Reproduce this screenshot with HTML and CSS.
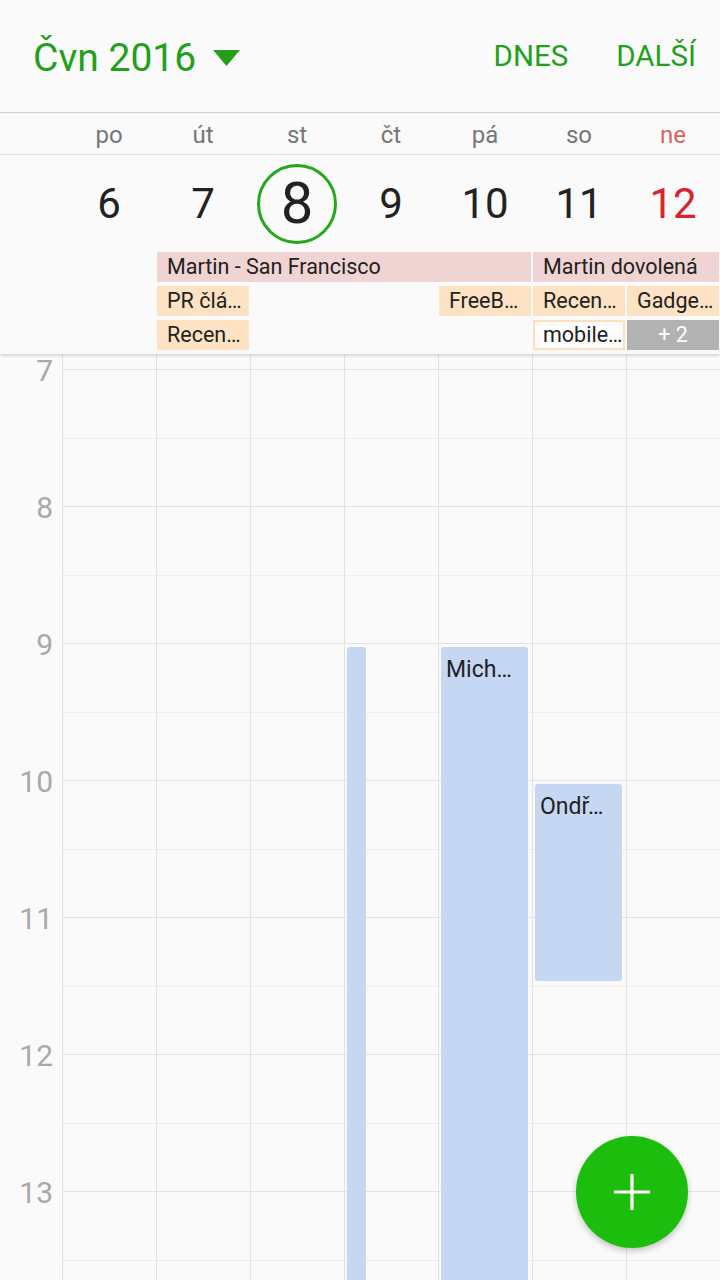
FILE: index.html
```html
<!DOCTYPE html>
<html lang="cs">
<head>
<meta charset="utf-8">
<title>Kalendář</title>
<link rel="stylesheet" href="styles.css">
</head>
<body>
<div class="app">
  <header class="topbar">
    <div class="title">Čvn 2016</div>
    <svg class="caret" width="27" height="16" viewBox="0 0 27 16"><polygon points="0,0 27,0 13.5,16" fill="#22a01a"/></svg>
    <div class="spacer"></div>
    <div class="action">DNES</div>
    <div class="action">DALŠÍ</div>
  </header>

  <section class="weekhead">
    <div class="daynames">
      <div></div>
      <div>po</div><div>út</div><div>st</div><div>čt</div><div>pá</div><div>so</div><div class="sun">ne</div>
    </div>
    <div class="dates">
      <div></div>
      <div class="date">6</div>
      <div class="date">7</div>
      <div class="date today"><span>8</span></div>
      <div class="date">9</div>
      <div class="date">10</div>
      <div class="date">11</div>
      <div class="date sun">12</div>
    </div>
    <div class="allday">
      <div class="ad pink c3-7 r1">Martin - San Francisco</div>
      <div class="ad pink c7-9 r1">Martin dovolená</div>
      <div class="ad orange c3 r2">PR člá…</div>
      <div class="ad orange c6 r2">FreeB…</div>
      <div class="ad orange c7 r2">Recen…</div>
      <div class="ad orange c8 r2">Gadge…</div>
      <div class="ad orange c3 r3">Recen…</div>
      <div class="ad outline c7 r3">mobile…</div>
      <div class="ad more c8 r3">+ 2</div>
    </div>
  </section>

  <section class="timeline">
    <div class="slot hour r2"></div><div class="hlabel r2">7</div>
    <div class="slot half r3"></div>
    <div class="slot hour r4"></div><div class="hlabel r4">8</div>
    <div class="slot half r5"></div>
    <div class="slot hour r6"></div><div class="hlabel r6">9</div>
    <div class="slot half r7"></div>
    <div class="slot hour r8"></div><div class="hlabel r8">10</div>
    <div class="slot half r9"></div>
    <div class="slot hour r10"></div><div class="hlabel r10">11</div>
    <div class="slot half r11"></div>
    <div class="slot hour r12"></div><div class="hlabel r12">12</div>
    <div class="slot half r13"></div>
    <div class="slot hour r14"></div><div class="hlabel r14">13</div>
    <div class="slot half r15"></div>

    <div class="ev ev-thin"></div>
    <div class="ev ev-mich">Mich…</div>
    <div class="ev ev-ondr">Ondř…</div>
  </section>

  <button class="fab" aria-label="Přidat">
    <svg width="36" height="36" viewBox="0 0 36 36"><path d="M18 0V36M0 18H36" stroke="#fff" stroke-width="3.2" fill="none"/></svg>
  </button>
</div>
</body>
</html>
```

FILE: styles.css
```css
* { box-sizing: border-box; }
html, body {
  margin: 0;
  padding: 0;
}
body {
  width: 720px;
  height: 1280px;
  overflow: hidden;
  background: #fafafa;
  font-family: Roboto, "Noto Sans", "Liberation Sans", sans-serif;
  color: #222;
}
.app {
  position: relative;
  width: 720px;
  height: 1280px;
  overflow: hidden;
}

/* top bar */
.topbar {
  height: 113px;
  display: flex;
  align-items: center;
  padding: 0 24px 0 33px;
  border-bottom: 1px solid #d4d4d4;
  background: #fafafa;
}
.title {
  font-size: 39px;
  color: #22a01a;
  padding-top: 3px;
}
.caret {
  margin-left: 17px;
  margin-top: 3px;
}
.spacer { flex: 1; }
.action {
  font-size: 29.5px;
  color: #22a01a;
  margin-left: 48px;
  padding-bottom: 1px;
}

/* week header */
.weekhead {
  position: relative;
  z-index: 3;
  background: #fafafa;
  box-shadow: 0 2px 3px rgba(0, 0, 0, 0.14);
  padding-bottom: 4px;
}
.daynames {
  display: grid;
  grid-template-columns: 62px repeat(7, 94px);
  height: 42px;
  border-bottom: 1px solid #e2e2e2;
  font-size: 24px;
  color: #767676;
  text-align: center;
  line-height: 44px;
}
.daynames .sun { color: #d96464; }

.dates {
  display: grid;
  grid-template-columns: 62px repeat(7, 94px);
  height: 80px;
  margin-top: 9px;
  margin-bottom: 8px;
  align-items: center;
  text-align: center;
}
.date {
  font-size: 42px;
  color: #222;
  line-height: 80px;
}
.date.sun { color: #d8232a; }
.date.today {
  display: flex;
  justify-content: center;
  align-items: center;
}
.date.today span {
  width: 80px;
  height: 80px;
  border: 3px solid #22a81a;
  border-radius: 50%;
  font-size: 58px;
  line-height: 72px;
  display: block;
}

.allday {
  display: grid;
  grid-template-columns: 62px repeat(7, 94px);
  grid-auto-rows: 30px;
  row-gap: 4px;
}
.ad {
  margin: 0 1px;
  font-size: 21.5px;
  line-height: 30px;
  padding-left: 10px;
  white-space: nowrap;
  overflow: hidden;
  color: #222;
}
.ad.pink { background: #f0d3d3; }
.ad.orange { background: #fde2c4; }
.ad.outline {
  background: #fcfcfc;
  border: 2px solid #fbdfbf;
  line-height: 26px;
  padding-left: 8px;
}
.ad.more {
  background: #b2b2b2;
  color: #fff;
  text-align: center;
  padding-left: 0;
}
.c3 { grid-column: 3; }
.c6 { grid-column: 6; }
.c7 { grid-column: 7; }
.c8 { grid-column: 8; }
.c3-7 { grid-column: 3 / 7; }
.c7-9 { grid-column: 7 / 9; }
.r1 { grid-row: 1; }
.r2 { grid-row: 2; }
.r3 { grid-row: 3; }

/* timeline */
.timeline {
  display: grid;
  grid-template-columns: 62px repeat(7, 94px);
  grid-template-rows: 15px repeat(14, 68.5px);
  background-image: linear-gradient(to right, #e1e1e1 0 1px, transparent 1px);
  background-size: 94px 100%;
  background-position: 62px 0;
  background-repeat: repeat-x;
}
.timeline .r2 { grid-row: 2; }
.timeline .r3 { grid-row: 3; }
.timeline .r4 { grid-row: 4; }
.timeline .r5 { grid-row: 5; }
.timeline .r6 { grid-row: 6; }
.timeline .r7 { grid-row: 7; }
.timeline .r8 { grid-row: 8; }
.timeline .r9 { grid-row: 9; }
.timeline .r10 { grid-row: 10; }
.timeline .r11 { grid-row: 11; }
.timeline .r12 { grid-row: 12; }
.timeline .r13 { grid-row: 13; }
.timeline .r14 { grid-row: 14; }
.timeline .r15 { grid-row: 15; }

.slot {
  grid-column: 2 / -1;
}
.slot.hour { border-top: 1px solid #e2e2e2; }
.slot.half { border-top: 1px dotted #e4e4e4; }

.hlabel {
  grid-column: 1;
  justify-self: end;
  align-self: start;
  margin-top: -16px;
  padding-right: 9px;
  font-size: 30px;
  line-height: 36px;
  color: #a9a9a9;
}

.ev {
  background: #c6d7f3;
  border-radius: 3px;
  font-size: 23px;
  line-height: 26px;
  color: #222;
  padding: 10px 0 0 5px;
  white-space: nowrap;
  overflow: hidden;
  z-index: 1;
}
.ev-thin {
  grid-column: 5;
  grid-row: 6 / 16;
  margin: 4px 0 0 3px;
  width: 19px;
  justify-self: start;
}
.ev-mich {
  grid-column: 6;
  grid-row: 6 / 16;
  margin: 4px 4px 0 3px;
}
.ev-ondr {
  grid-column: 7;
  grid-row: 8 / 11;
  margin: 4px 4px 5px 3px;
}

/* floating action button */
.fab {
  position: absolute;
  left: 576px;
  top: 1136px;
  width: 112px;
  height: 112px;
  border-radius: 50%;
  border: none;
  background: #1dbd0e;
  box-shadow: 0 3px 6px rgba(0, 0, 0, 0.22);
  display: flex;
  align-items: center;
  justify-content: center;
  padding: 0;
  z-index: 5;
}
```
